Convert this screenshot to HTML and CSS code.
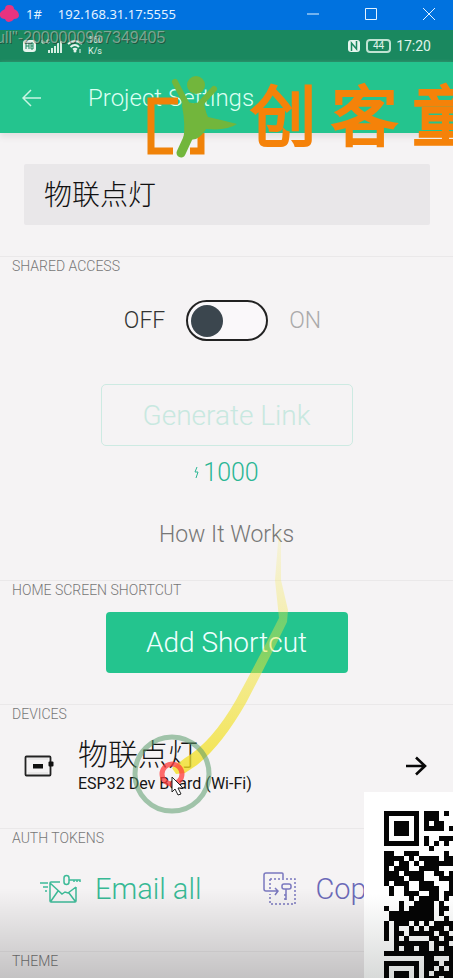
FILE: index.html
```html
<!DOCTYPE html>
<html lang="en">
<head>
<meta charset="utf-8">
<meta name="viewport" content="width=device-width, initial-scale=1">
<title>Project Settings</title>
<link rel="stylesheet" href="styles.css">
</head>
<body>
<div class="window">
  <header class="titlebar">
    <svg class="app-icon" width="19" height="20" viewBox="0 0 19 20" aria-hidden="true"><path d="M5 5Q5 1 9 1Q14 1 14 5Q19 7 19 12Q18 15 14 15Q12 18 9 18Q6 18 5 15Q1 15 0 12V9Q1 7 5 5Z" fill="#e8337f"/></svg>
    <span class="win-name">1#</span>
    <span class="win-address">192.168.31.17:5555</span>
    <div class="win-controls">
      <button class="win-btn" aria-label="Minimize"><svg width="14" height="14" viewBox="0 0 14 14"><path d="M1 7H13"/></svg></button>
      <button class="win-btn" aria-label="Maximize"><svg width="14" height="14" viewBox="0 0 14 14"><path d="M1.500 1.500H12.500V12.500H1.500Z"/></svg></button>
      <button class="win-btn" aria-label="Close"><svg width="14" height="14" viewBox="0 0 14 14"><path d="M1 1L13 13M13 1L1 13"/></svg></button>
    </div>
  </header>

  <div class="statusbar">
    <svg width="15" height="14" viewBox="0 0 15 14" aria-hidden="true"><rect x="1" y="1" width="13" height="12" rx="3" fill="#e6f5ee"/><path d="M4 4V10M4 7H7M7 4V10M9 4V10H11V7H9M9 4H11V7" fill="none" stroke="#1a885f"/></svg>
    <svg class="signal" width="24" height="15" viewBox="0 0 24 15" aria-hidden="true"><path d="M2 1V4H5M10 1H7V4H9V3" fill="none" stroke="#d5eee2"/><path d="M9 14V11M12 14V9M15 14V7M18 14V4M21 14V2" stroke="#d5eee2" stroke-width="2"/></svg>
    <svg width="16" height="14" viewBox="0 0 16 14" aria-hidden="true"><path d="M1 5Q8-1 15 5M3.500 8Q8 4 12 8M6 10.500Q8 9 10 10.500" fill="none" stroke="#e6f5ee" stroke-width="2"/><circle cx="8" cy="12" r="1.500" fill="#e6f5ee"/><path d="M13 10V14" stroke="#e6f5ee"/></svg>
    <div class="net-speed"><span>160</span><span>K/s</span></div>
    <div class="status-right">
      <svg width="14" height="14" viewBox="0 0 14 14" aria-hidden="true"><rect x="1" y="1" width="12" height="12" rx="3" fill="#e6f5ee"/><path d="M4.500 12V4L9.500 10V2" fill="none" stroke="#1a885f" stroke-width="1.500"/></svg>
      <span class="battery">44</span>
      <span class="clock">17:20</span>
    </div>
  </div>

  <div class="appbar">
    <button class="back" aria-label="Back"><svg width="20" height="18" viewBox="0 0 20 18"><path d="M19 9H1M9 1L1 9L9 17" fill="none" stroke="#c9f5e3" stroke-width="1.500"/></svg></button>
    <h1>Project Settings</h1>
  </div>

  <main>
    <div class="name-field"><input type="text" aria-label="Project name" value="物联点灯"></div>

    <section>
      <h2>SHARED ACCESS</h2>
      <label class="toggle-row"><span>OFF</span><input type="checkbox" class="toggle" aria-label="Shared access"><span class="on">ON</span></label>
      <button class="generate">Generate Link</button>
      <p class="price"><svg width="5" height="12" viewBox="0 0 5 12" aria-hidden="true"><path d="M3 0L1 5H4L2 11" fill="none" stroke="#2bb694"/></svg>1000</p>
      <a class="how" href="#how">How It Works</a>
    </section>

    <section>
      <h2>HOME SCREEN SHORTCUT</h2>
      <button class="shortcut">Add Shortcut</button>
    </section>

    <section>
      <h2>DEVICES</h2>
      <a class="device" href="#device">
        <svg width="30" height="24" viewBox="0 0 30 24" aria-hidden="true"><rect x="1.500" y="2.500" width="25" height="19" rx="1" fill="none" stroke="#222" stroke-width="1.800"/><path d="M4 5H24M4 19H24" stroke="#ddd"/><rect x="9" y="10" width="10" height="4.500" fill="#111"/><rect x="24.500" y="7.500" width="5" height="5" rx="1" fill="#111"/></svg>
        <span class="device-text"><span class="device-name">物联点灯</span><span class="device-type">ESP32 Dev Board (Wi-Fi)</span></span>
        <svg width="22" height="20" viewBox="0 0 22 20" aria-hidden="true"><path d="M1 10H20M11 1.500L20 10L11 18.500" fill="none" stroke="#080808" stroke-width="2.600"/></svg>
      </a>
    </section>

    <section>
      <h2>AUTH TOKENS</h2>
      <div class="tokens">
        <button class="token email"><svg width="42" height="30" viewBox="0 0 42 30" fill="none" stroke="#3dbb98" stroke-width="1.500" aria-hidden="true"><path d="M20 8H11Q10 8 10 9V27Q10 28 11 28H35Q36 28 36 27V13M10 9L22 20L25 18L28 19L36 13M11 27L18 17M35 27L29 19M0 9H8M3 13H8M5 17H7"/><rect x="24" y="1.500" width="5" height="9" rx="2.500"/><path d="M29 6H40V8M34 6V8M37 6V8"/></svg><span>Email all</span></button>
        <button class="token copy"><svg width="34" height="36" viewBox="0 0 34 36" fill="none" stroke="#7a78be" stroke-width="1.500" aria-hidden="true"><path d="M20 7V3Q20 2 19 2H3Q1 2 1 4V18Q1 20 3 20H15M12 17L15 20L12 24"/><path d="M7 8H32V33H7V23M7 8V18" stroke-dasharray="2 2"/><rect x="19" y="13" width="9" height="5" rx="2"/><path d="M23 18V29M21 24H23M21 28H23"/></svg><span>Copy all</span></button>
      </div>
    </section>

    <section>
      <h2>THEME</h2>
    </section>
  </main>

  <div class="shade"></div>

  <svg class="trail" width="180" height="300" viewBox="-20 0 180 300" aria-hidden="true">
    <defs><linearGradient id="fade" x1="0" y1="0" x2="0" y2="1"><stop offset="0" stop-color="#f8ec60" stop-opacity=".15"/><stop offset=".4" stop-color="#f3e53e" stop-opacity=".4"/><stop offset="1" stop-color="#f2df20" stop-opacity=".8"/></linearGradient></defs>
    <path d="M129 10L131 10L131 60L138 90L137 102Q115 147 96 183Q72 225 47 245L35 253L26 254L22 248L35 238Q62 222 86 180Q108 140 129 98L125 60Z" fill="url(#fade)"/>
    <circle cx="22" cy="254" r="37" fill="none" stroke="#5a9b6b" stroke-opacity=".55" stroke-width="5"/>
    <circle cx="22" cy="254" r="10" fill="none" stroke="#ff3b3b" stroke-opacity=".75" stroke-width="5"/>
    <path d="M22 257V272L25 269L28 275L31 274L28 268H33Z" fill="#fff" stroke="#222"/>
  </svg>

  <div class="brand">
    <svg width="92" height="84" viewBox="0 0 92 84" aria-hidden="true">
      <path d="M31 25H4V75H26M43 75H54V57" fill="none" stroke="#f08208" stroke-width="7"/>
      <g fill="none" stroke="#72b63c" stroke-linecap="round"><path d="M28 6L39 27" stroke-width="6"/><path d="M67 13L54 27" stroke-width="6"/><path d="M46 51L34 77" stroke-width="9"/></g>
      <path d="M36 23Q47 31 57 24Q57 32 61 41Q75 44 90 48Q80 55 59 53Q55 60 49 63L36 65Q39 49 35 30Z" fill="#72b63c"/><circle cx="49" cy="9" r="9" fill="#72b63c"/>
    </svg>
    <div class="brand-text"><span>创</span><span>客</span><span>童</span></div>
  </div>

  <div class="stamp">ull"-2000000967349405</div>
  <div class="qr"><svg id="qr" width="70" height="167" viewBox="0 0 70 167" shape-rendering="crispEdges" role="img" aria-label="QR code"></svg></div>
</div>
<script src="qr.js"></script>
</body>
</html>
```
FILE: styles.css
```css
* { box-sizing: border-box; }
body { margin: 0; font-family: Roboto, "Noto Sans CJK SC", sans-serif; font-weight: 300; background: #f5f3f4; }
button, input { font: inherit; }
button { border: 0; padding: 0; background: none; cursor: pointer; }
a { color: inherit; text-decoration: none; }
svg { display: block; flex: none; }
h1, h2, p { margin: 0; font-weight: inherit; }

.window { position: relative; height: 100vh; overflow: hidden; }

.titlebar { display: flex; align-items: center; height: 30px; padding-bottom: 2px; background: #0072df; color: #e4f3ff; font: 13px "Noto Sans", sans-serif; }
.win-name { margin-left: 7px; }
.win-address { margin-left: 16px; }
.win-controls { display: flex; gap: 44px; margin-left: auto; padding-right: 17px; }
.win-btn svg { fill: none; stroke: #e4f3ff; stroke-width: 1; }

.statusbar { display: flex; align-items: center; gap: 3px; height: 32px; padding: 0 22px; background: #1a885f; color: #e0f3ea; font-weight: 400; }
.net-speed { display: flex; flex-direction: column; padding-left: 2px; font-size: 9px; line-height: 11px; }
.status-right { display: flex; align-items: center; gap: 5px; margin-left: auto; }
.battery { width: 25px; height: 14px; border: 2px solid #bfe3d2; border-radius: 4px; font-size: 10px; line-height: 10px; text-align: center; }
.clock { font-size: 14px; }

.appbar { display: flex; align-items: center; gap: 46px; height: 71px; padding: 0 22px; background: #24c48e; color: #dcfff2; box-shadow: 0 4px 6px #e2e0e1; }
h1 { font-size: 24px; }

.name-field { padding: 31px 23px 31px 24px; }
.name-field input { display: block; width: 100%; height: 61px; padding: 0 20px 4px; border: 0; border-radius: 2px; background: #e9e7e9; color: #111; font-size: 28px; }

section { padding: 0 12px; display: flex; flex-direction: column; align-items: center; border-top: 1px solid #eae8e9; }
h2 { align-self: stretch; color: #777; font-size: 14px; line-height: 18px; }

.toggle-row { display: flex; align-items: center; gap: 21px; margin-top: 25px; padding-right: 8px; color: #333; font-size: 23px; }
.on { color: #aaa; }
.toggle { appearance: none; width: 82px; height: 41px; margin: 0; padding: 3px; border: 2px solid #222; border-radius: 21px; background: #faf8fa; }
.toggle::before { content: ""; display: block; width: 32px; height: 32px; border-radius: 50%; background: #3b464e; }
.toggle:checked::before { margin-left: auto; }
.generate { width: 252px; height: 62px; margin-top: 43px; border: 1px solid #cdeae2; border-radius: 5px; color: #c8e8e0; font-size: 28px; }
.price { display: flex; align-items: center; gap: 4px; margin-top: 12px; color: #2bb694; font-size: 25px; line-height: 30px; }
.how { margin: 32px 0 30px; color: #777; font-size: 23px; line-height: 30px; }
.shortcut { width: 242px; height: 61px; margin: 13px 0 31px; border-radius: 4px; background: #24c48e; color: #efffff; font-size: 28px; }

.device { align-self: stretch; display: flex; align-items: center; gap: 24px; padding: 14px 14px 33px 12px; color: #151515; }
.device-text { flex: 1; display: flex; flex-direction: column; }
.device-name { font-size: 30px; line-height: 36px; }
.device-type { font-size: 16px; line-height: 22px; font-weight: 400; }

.tokens { align-self: stretch; display: flex; gap: 62px; height: 104px; padding: 0 28px 20px; }
.token { display: flex; align-items: center; gap: 13px; font-size: 29px; white-space: nowrap; }
.email { color: #37b994; }
.copy { color: #6b69b8; gap: 18px; }

.shade { position: absolute; inset: auto 0 0; height: 90px; background: linear-gradient(transparent, rgba(0, 0, 0, .2)); pointer-events: none; }
.trail { position: absolute; left: 130px; top: 520px; pointer-events: none; }
.brand { position: absolute; left: 147px; top: 76px; display: flex; gap: 12px; pointer-events: none; }
.brand-text { display: flex; gap: 16px; color: #f58209; font-size: 65px; line-height: 84px; font-weight: 300; -webkit-text-stroke: 4px #f58209; stroke-linejoin: round; }
.stamp { position: absolute; left: -4px; top: 29px; color: rgba(190, 195, 190, .6); font: 16px/18px "Liberation Sans", sans-serif; text-shadow: 1px 1px 0 rgba(30, 60, 45, .6); pointer-events: none; }
.qr { position: absolute; right: 0; bottom: 0; width: 89px; padding: 19px 0 0 20px; background: linear-gradient(#fff 55%, #d8dad9); overflow: hidden; }
```
FILE: qr.js
```js
const rows = [
  "11111110111010", "10000010111000", "10111010101100", "10111010111101",
  "10111010000000", "10000010100111", "11111110101010", "00000000010000",
  "11001110000010", "11110101111011", "11011010111111", "10111001111000",
  "11101111001101", "11110111000111", "10111001110001", "01001001111001",
  "01001110011011", "00000101111010", "00010011110100", "10010111110110",
  "01111111110100", "01111111110010", "10111010101111", "10100101011101",
  "10110111110110", "10101000011011", "00111111101110", "00101101101011",
  "11111111111111", "00000000110001", "11111110111011", "10000010110101",
  "10111010101111", "10111010111011"
];
const d = rows.map((row, y) => [...row].map((cell, x) =>
  cell === "1" ? `M${x * 5} ${y * 5}h5v5h-5z` : "").join("")).join("");
document.getElementById("qr").innerHTML = `<path d="${d}" fill="#050505"/>`;
```
